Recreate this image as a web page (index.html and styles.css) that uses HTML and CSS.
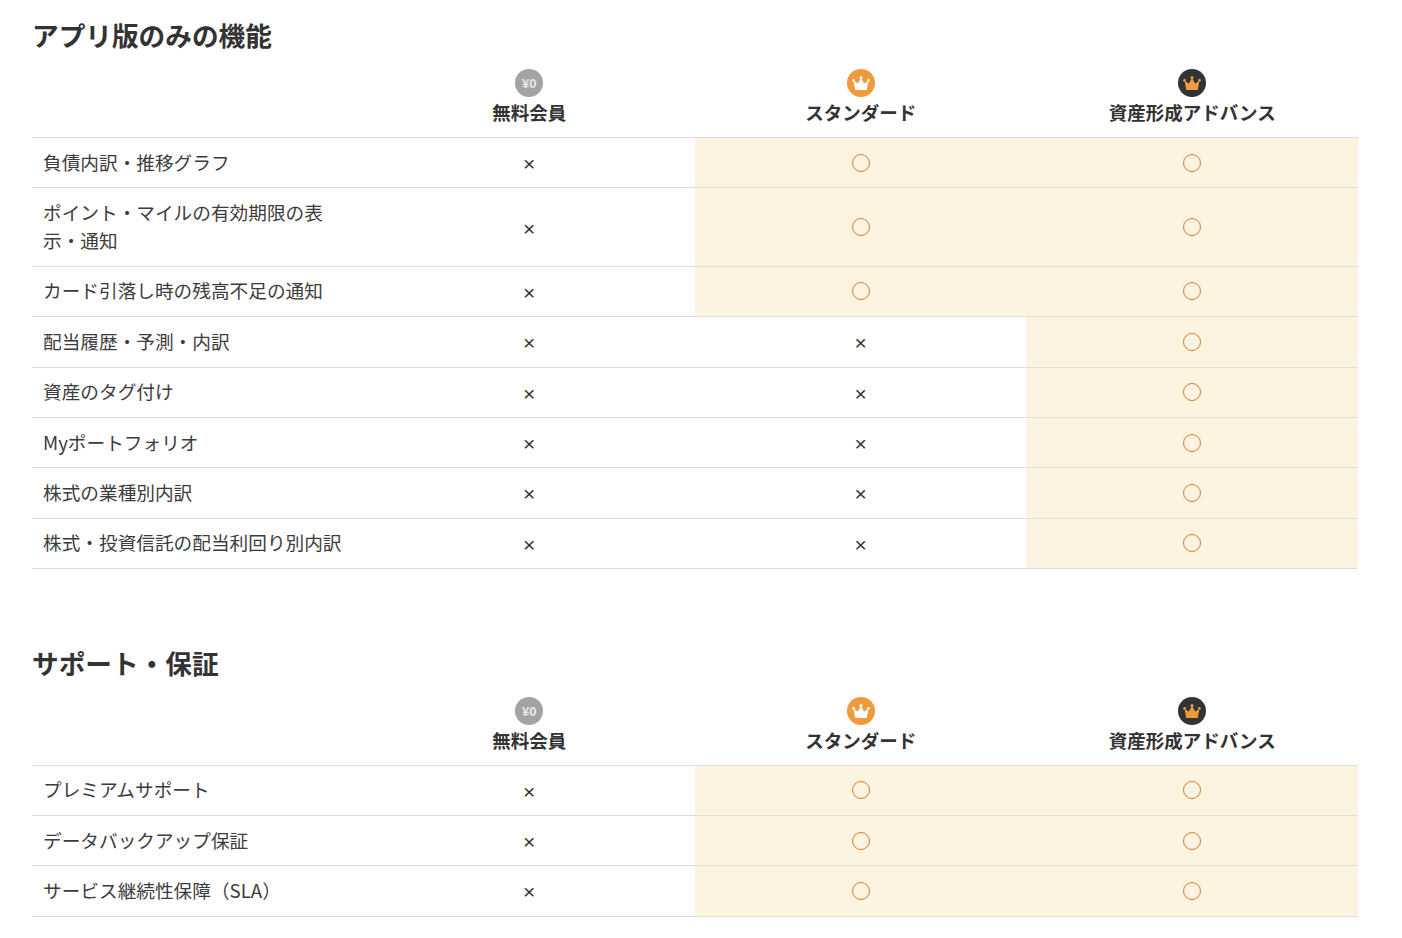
FILE: index.html
```html
<!DOCTYPE html>
<html lang="ja">
<head>
<meta charset="utf-8">
<title>プラン比較</title>
<link rel="stylesheet" href="styles.css">
</head>
<body>
<svg class="defs" width="0" height="0" aria-hidden="true">
  <symbol id="crown" viewBox="0 0 28 28">
    <path d="M8.2 21 6.6 12l4.2 2.4L14 9l3.2 5.4 4.2-2.4-1.6 9Z"/>
    <circle cx="6.6" cy="11.4" r="1.4"/><circle cx="14" cy="8.4" r="1.5"/><circle cx="21.4" cy="11.4" r="1.4"/>
  </symbol>
</svg>
<main class="page">
  <section class="group">
    <h2 class="title">アプリ版のみの機能</h2>
    <table class="plans">
      <thead>
        <tr>
          <th class="feature"></th>
          <th><span class="badge badge-free">¥0</span>無料会員</th>
          <th><span class="badge badge-std"><svg class="crown"><use href="#crown"/></svg></span>スタンダード</th>
          <th><span class="badge badge-adv"><svg class="crown"><use href="#crown"/></svg></span>資産形成アドバンス</th>
        </tr>
      </thead>
      <tbody>
        <tr><td class="feature">負債内訳・推移グラフ</td><td>×</td><td class="on"><i class="yes"></i></td><td class="on"><i class="yes"></i></td></tr>
        <tr><td class="feature">ポイント・マイルの有効期限の表示・通知</td><td>×</td><td class="on"><i class="yes"></i></td><td class="on"><i class="yes"></i></td></tr>
        <tr><td class="feature">カード引落し時の残高不足の通知</td><td>×</td><td class="on"><i class="yes"></i></td><td class="on"><i class="yes"></i></td></tr>
        <tr><td class="feature">配当履歴・予測・内訳</td><td>×</td><td>×</td><td class="on"><i class="yes"></i></td></tr>
        <tr><td class="feature">資産のタグ付け</td><td>×</td><td>×</td><td class="on"><i class="yes"></i></td></tr>
        <tr><td class="feature">Myポートフォリオ</td><td>×</td><td>×</td><td class="on"><i class="yes"></i></td></tr>
        <tr><td class="feature">株式の業種別内訳</td><td>×</td><td>×</td><td class="on"><i class="yes"></i></td></tr>
        <tr><td class="feature">株式・投資信託の配当利回り別内訳</td><td>×</td><td>×</td><td class="on"><i class="yes"></i></td></tr>
      </tbody>
    </table>
  </section>
  <section class="group">
    <h2 class="title">サポート・保証</h2>
    <table class="plans">
      <thead>
        <tr>
          <th class="feature"></th>
          <th><span class="badge badge-free">¥0</span>無料会員</th>
          <th><span class="badge badge-std"><svg class="crown"><use href="#crown"/></svg></span>スタンダード</th>
          <th><span class="badge badge-adv"><svg class="crown"><use href="#crown"/></svg></span>資産形成アドバンス</th>
        </tr>
      </thead>
      <tbody>
        <tr><td class="feature">プレミアムサポート</td><td>×</td><td class="on"><i class="yes"></i></td><td class="on"><i class="yes"></i></td></tr>
        <tr><td class="feature">データバックアップ保証</td><td>×</td><td class="on"><i class="yes"></i></td><td class="on"><i class="yes"></i></td></tr>
        <tr><td class="feature">サービス継続性保障（SLA）</td><td>×</td><td class="on"><i class="yes"></i></td><td class="on"><i class="yes"></i></td></tr>
      </tbody>
    </table>
  </section>
</main>
</body>
</html>
```
FILE: styles.css
```css
html, body {
  margin: 0;
  background: #fff;
}
body {
  font-family: "Noto Sans CJK JP", "Noto Sans", sans-serif;
  color: #333;
  font-size: 18.67px;
  line-height: 28px;
}
.defs {
  position: absolute;
}
.page {
  display: flex;
  flex-direction: column;
  gap: 73.5px;
  width: 1326px;
  padding: 15px 0 0 32px;
}
.title {
  margin: 0 0 14px;
  font-size: 26.67px;
  line-height: 40px;
  font-weight: 700;
}
.plans {
  width: 100%;
  table-layout: fixed;
  border-collapse: collapse;
}
.plans th {
  padding: 0 0 11px;
  font-size: 18.5px;
  line-height: 28px;
  font-weight: 700;
  text-align: center;
  vertical-align: bottom;
  border-bottom: 1px solid #ddd;
}
.plans td {
  padding: 12.2px 11px 9.2px;
  font-family: "Liberation Sans", sans-serif;
  font-size: 21px;
  text-align: center;
  border-bottom: 1px solid #ddd;
}
.plans .feature {
  width: 331.4px;
  font-family: "Noto Sans CJK JP", "Noto Sans", sans-serif;
  font-size: 18.67px;
  text-align: left;
}
.plans td.feature {
  padding: 9.7px 20px 11.7px 11px;
  color: #3c3c3c;
}
.plans .on {
  padding: 10.7px 11px;
  background: #fdf3e1;
}
.yes {
  display: block;
  width: 18px;
  height: 18px;
  margin: 0 auto;
  box-sizing: border-box;
  border: 1px solid #de7b2c;
  border-radius: 50%;
}
.badge {
  display: flex;
  align-items: center;
  justify-content: center;
  box-sizing: border-box;
  width: 28px;
  height: 28px;
  margin: 0 auto 1px;
  padding-top: 1px;
  border-radius: 50%;
  font-family: "Liberation Sans", sans-serif;
  font-size: 13px;
  line-height: 27px;
  font-weight: 700;
}
.badge-free {
  background: #a3a3a3;
  color: #e8e8e8;
}
.badge-std {
  background: #f09a3e;
  color: #fff;
}
.badge-adv {
  background: #333;
  color: #f09a3e;
}
.crown {
  flex: none;
  width: 28px;
  height: 28px;
  margin-top: -1px;
  fill: currentColor;
}
```
